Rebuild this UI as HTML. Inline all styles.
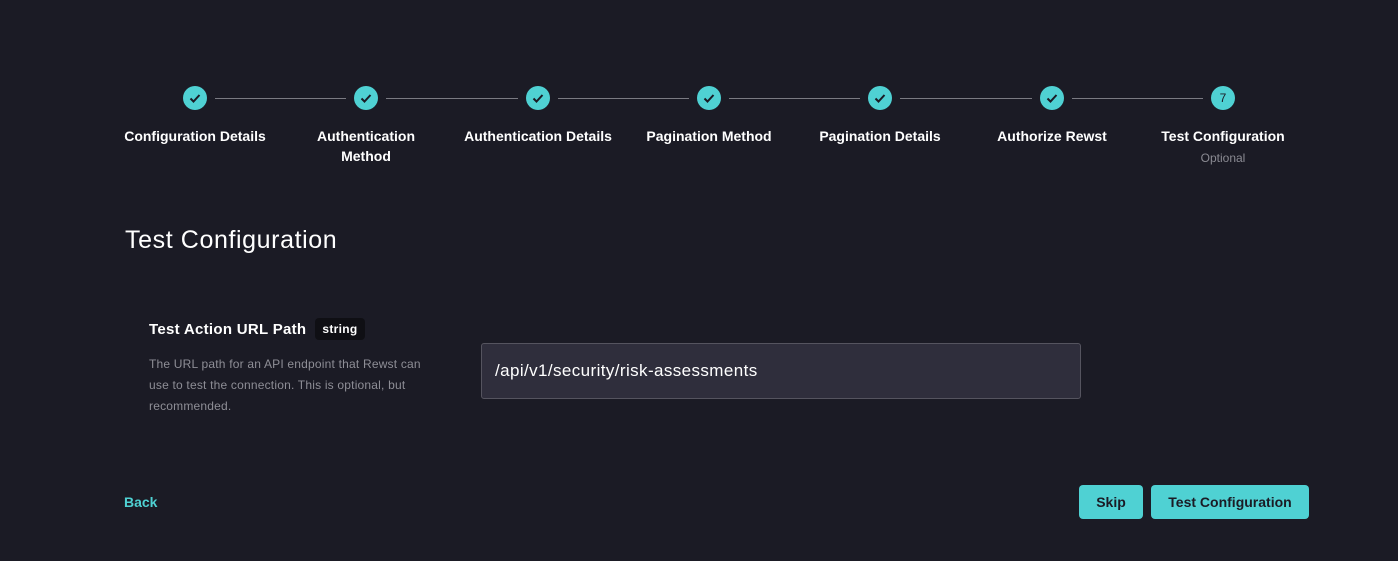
<!DOCTYPE html><html><head><style>
body{margin:0;width:1398px;height:561px;background:#1b1b25;font-family:"Liberation Sans",sans-serif;color:#fff;position:relative;overflow:hidden}
.c{position:absolute;top:86px;width:24px;height:24px;border-radius:50%;background:#4fd1d3;display:flex;align-items:center;justify-content:center;color:#1b1b25;font-size:12px}
.l{position:absolute;top:98px;height:1px;background:#7a7a82}
.t{position:absolute;top:126px;width:170px;text-align:center;font-size:14px;font-weight:bold;line-height:20px}
.btn{position:absolute;top:485px;height:34px;background:#4fd1d3;color:#1b1b25;border-radius:4px;font-size:14px;font-weight:bold;display:flex;align-items:center;justify-content:center}
</style></head><body>
<div class="c" style="left:183px"><svg width="14" height="14" viewBox="0 0 14 14"><path d="M2.5 7.5l3 3 6-6.5" stroke="#1b1b25" stroke-width="2" fill="none"/></svg></div>
<div class="c" style="left:354px"><svg width="14" height="14" viewBox="0 0 14 14"><path d="M2.5 7.5l3 3 6-6.5" stroke="#1b1b25" stroke-width="2" fill="none"/></svg></div>
<div class="c" style="left:526px"><svg width="14" height="14" viewBox="0 0 14 14"><path d="M2.5 7.5l3 3 6-6.5" stroke="#1b1b25" stroke-width="2" fill="none"/></svg></div>
<div class="c" style="left:697px"><svg width="14" height="14" viewBox="0 0 14 14"><path d="M2.5 7.5l3 3 6-6.5" stroke="#1b1b25" stroke-width="2" fill="none"/></svg></div>
<div class="c" style="left:868px"><svg width="14" height="14" viewBox="0 0 14 14"><path d="M2.5 7.5l3 3 6-6.5" stroke="#1b1b25" stroke-width="2" fill="none"/></svg></div>
<div class="c" style="left:1040px"><svg width="14" height="14" viewBox="0 0 14 14"><path d="M2.5 7.5l3 3 6-6.5" stroke="#1b1b25" stroke-width="2" fill="none"/></svg></div>
<div class="c" style="left:1211px">7</div>
<div class="l" style="left:215px;width:131px"></div>
<div class="l" style="left:386px;width:132px"></div>
<div class="l" style="left:558px;width:131px"></div>
<div class="l" style="left:729px;width:131px"></div>
<div class="l" style="left:900px;width:132px"></div>
<div class="l" style="left:1072px;width:131px"></div>
<div class="t" style="left:110px">Configuration Details</div>
<div class="t" style="left:281px">Authentication<br>Method</div>
<div class="t" style="left:453px">Authentication Details</div>
<div class="t" style="left:624px">Pagination Method</div>
<div class="t" style="left:795px">Pagination Details</div>
<div class="t" style="left:967px">Authorize Rewst</div>
<div class="t" style="left:1138px">Test Configuration<div style="font-weight:normal;font-size:12px;color:#8a8a92;margin-top:2px">Optional</div></div>
<div style="position:absolute;left:125px;top:226px;font-size:25px;letter-spacing:0.6px">Test Configuration</div>
<div style="position:absolute;left:149px;top:318px;font-size:15px;font-weight:bold;display:flex;align-items:center;letter-spacing:0.3px">Test Action URL Path<span style="margin-left:9px;background:#0f0f14;border-radius:4px;padding:4px 7px;font-size:12px">string</span></div>
<div style="position:absolute;left:149px;top:354px;width:292px;font-size:12px;line-height:21px;color:#8e8e96;letter-spacing:0.2px">The URL path for an API endpoint that Rewst can use to test the connection. This is optional, but recommended.</div>
<div style="position:absolute;left:481px;top:343px;width:598px;height:54px;background:#2f2e3c;border:1px solid #55545f;border-radius:3px;display:flex;align-items:center"><span style="margin-left:13px;font-size:17px;letter-spacing:0.4px">/api/v1/security/risk-assessments</span></div>
<div style="position:absolute;left:124px;top:494px;font-size:14px;font-weight:bold;color:#4fd1d3">Back</div>
<div class="btn" style="left:1079px;width:64px">Skip</div>
<div class="btn" style="left:1151px;width:158px">Test Configuration</div>
</body></html>
